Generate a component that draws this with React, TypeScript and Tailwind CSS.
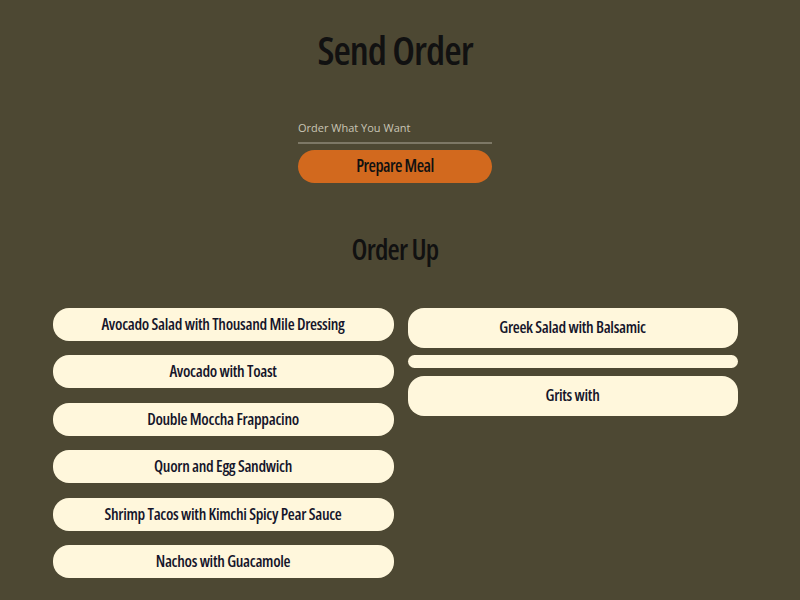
import React from 'react';

const leftOrders = [
  'Avocado Salad with Thousand Mile Dressing',
  'Avocado with Toast',
  'Double Moccha Frappacino',
  'Quorn and Egg Sandwich',
  'Shrimp Tacos with Kimchi Spicy Pear Sauce',
  'Nachos with Guacamole',
];

const rightOrders = ['Greek Salad with Balsamic', '', 'Grits with'];

const condensed = "font-['Open_Sans',sans-serif] [font-stretch:75%]";

export default function App() {
  return (
    <div className={`min-h-screen bg-[#4d4833] pr-[10px] text-[#111111] ${condensed}`}>
      <div className="flex flex-col items-center pt-[22px]">
        <h1 className="text-[40px] leading-[56px] font-semibold tracking-[-1px]">Send Order</h1>
        <div className="mt-[42px] w-[194px]">
          <div className="border-b-2 border-[#7d7866] pb-[5px] text-[11px] text-[#c9c5b5] [font-stretch:100%]">
            Order What You Want
          </div>
          <button className="mt-[6px] h-[33px] w-full rounded-full bg-[#d2691e] text-[17px] font-semibold tracking-[-0.5px]">
            Prepare Meal
          </button>
        </div>
        <h2 className="mt-[46px] text-[28px] leading-[40px] font-semibold tracking-[-0.8px]">Order Up</h2>
      </div>
      <div className="mt-[39px] flex justify-center gap-[14px]">
        <div className="flex w-[341px] flex-col gap-[14.5px]">
          {leftOrders.map(o => (
            <div key={o} className="h-[33px] rounded-[16px] bg-[#fff7dc] text-center text-[16px] font-semibold leading-[33px] tracking-[-0.3px] text-[#15152a]">
              {o}
            </div>
          ))}
        </div>
        <div className="flex w-[330px] flex-col gap-[7.5px]">
          {rightOrders.map((o, i) => (
            <div key={i} className="rounded-[16px] bg-[#fff7dc] py-[6.5px] text-center text-[16px] font-semibold leading-[27px] tracking-[-0.3px] text-[#15152a]">
              {o}
            </div>
          ))}
        </div>
      </div>
    </div>
  );
}
